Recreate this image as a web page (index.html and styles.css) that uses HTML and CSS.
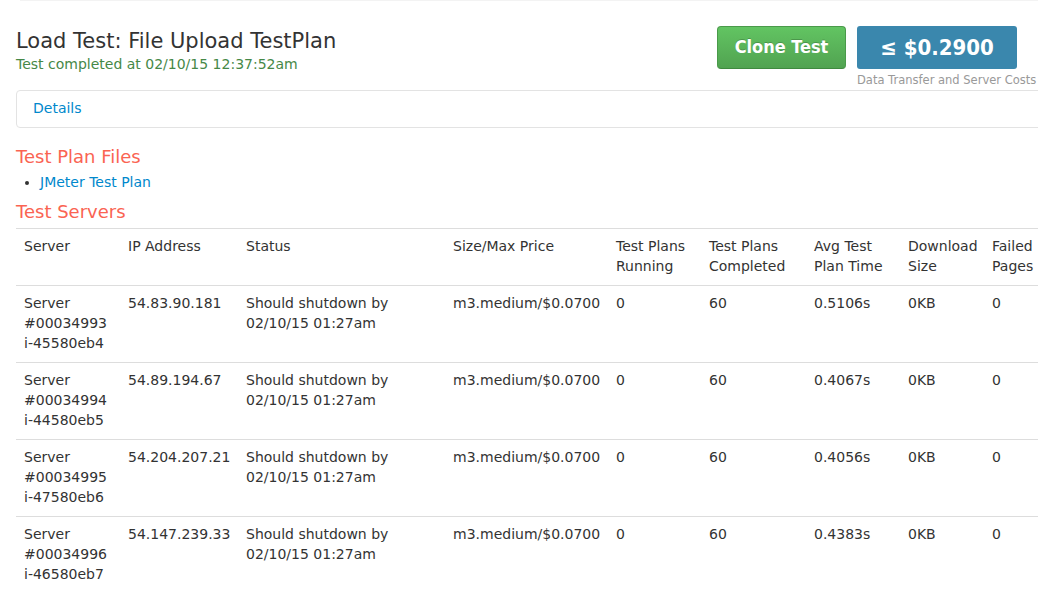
FILE: index.html
```html
<!DOCTYPE html>
<html>
<head>
<meta charset="utf-8">
<title>Load Test</title>
<link rel="stylesheet" href="styles.css">
</head>
<body>
<div class="topbar"></div>
<div class="page">
  <div class="header">
    <div class="title-block">
      <h1 class="title">Load Test: File Upload TestPlan</h1>
      <div class="subtitle">Test completed at 02/10/15 12:37:52am</div>
    </div>
    <div class="actions">
      <a class="btn-clone" href="#">Clone Test</a>
      <div class="price-col">
        <div class="price">≤ $0.2900</div>
        <div class="price-caption">Data Transfer and Server Costs</div>
      </div>
    </div>
  </div>

  <div class="panel"><a class="link" href="#">Details</a></div>

  <h2 class="section">Test Plan Files</h2>
  <ul class="files">
    <li><a class="link" href="#">JMeter Test Plan</a></li>
  </ul>

  <h2 class="section section-servers">Test Servers</h2>
  <table class="servers">
    <colgroup>
      <col class="c-server"><col class="c-ip"><col class="c-status"><col class="c-size">
      <col class="c-run"><col class="c-done"><col class="c-avg"><col class="c-dl"><col class="c-fail">
    </colgroup>
    <thead>
      <tr>
        <th>Server</th><th>IP Address</th><th>Status</th><th>Size/Max Price</th>
        <th>Test Plans<br>Running</th><th>Test Plans<br>Completed</th><th>Avg Test<br>Plan Time</th>
        <th>Download<br>Size</th><th>Failed<br>Pages</th>
      </tr>
    </thead>
    <tbody>
      <tr>
        <td>Server<br>#00034993<br>i-45580eb4</td><td>54.83.90.181</td><td>Should shutdown by<br>02/10/15 01:27am</td>
        <td>m3.medium/$0.0700</td><td>0</td><td>60</td><td>0.5106s</td><td>0KB</td><td>0</td>
      </tr>
      <tr>
        <td>Server<br>#00034994<br>i-44580eb5</td><td>54.89.194.67</td><td>Should shutdown by<br>02/10/15 01:27am</td>
        <td>m3.medium/$0.0700</td><td>0</td><td>60</td><td>0.4067s</td><td>0KB</td><td>0</td>
      </tr>
      <tr>
        <td>Server<br>#00034995<br>i-47580eb6</td><td>54.204.207.21</td><td>Should shutdown by<br>02/10/15 01:27am</td>
        <td>m3.medium/$0.0700</td><td>0</td><td>60</td><td>0.4056s</td><td>0KB</td><td>0</td>
      </tr>
      <tr>
        <td>Server<br>#00034996<br>i-46580eb7</td><td>54.147.239.33</td><td>Should shutdown by<br>02/10/15 01:27am</td>
        <td>m3.medium/$0.0700</td><td>0</td><td>60</td><td>0.4383s</td><td>0KB</td><td>0</td>
      </tr>
    </tbody>
  </table>
</div>
</body>
</html>
```

FILE: styles.css
```css
html, body {
  margin: 0;
  padding: 0;
  overflow: hidden;
  background: #fff;
}
body {
  font-family: "DejaVu Sans", "Liberation Sans", sans-serif;
  font-size: 14px;
  line-height: 20px;
  color: #333;
}
.topbar {
  height: 1px;
  margin-left: 20px;
  background: #f3f3f3;
}
.page {
  width: 1080px;
  padding-left: 16px;
  box-sizing: border-box;
}
.header {
  display: flex;
  justify-content: space-between;
  align-items: flex-start;
  padding-right: 63px;
}
.title {
  margin: 27px 0 0;
  font-size: 21px;
  line-height: 26px;
  font-weight: normal;
  color: #333;
}
.subtitle {
  color: #468847;
  font-size: 14px;
  line-height: 20px;
}
.actions {
  display: flex;
  gap: 11px;
  margin-top: 25px;
}
.btn-clone {
  display: block;
  box-sizing: border-box;
  width: 129px;
  height: 43px;
  padding-bottom: 2px;
  border: 1px solid #4a9a4a;
  border-bottom-color: #3f8a3f;
  border-radius: 4px;
  background: linear-gradient(#62c462, #51a351);
  color: #fff;
  text-decoration: none;
  text-align: center;
  font-family: "DejaVu Sans Condensed", "DejaVu Sans", sans-serif;
  font-stretch: condensed;
  font-weight: bold;
  font-size: 18px;
  line-height: 39px;
  text-shadow: 0 -1px 0 rgba(0,0,0,0.2);
}
.price-col {
  width: 160px;
}
.price {
  height: 43px;
  border-radius: 3px;
  background: #3a87ad;
  color: #fff;
  text-align: center;
  font-family: "DejaVu Sans Condensed", "DejaVu Sans", sans-serif;
  font-stretch: condensed;
  font-weight: bold;
  font-size: 22px;
  line-height: 43px;
}
.price-caption {
  margin-top: 5px;
  white-space: nowrap;
  font-size: 11.5px;
  line-height: 13px;
  color: #999;
}
.panel {
  margin-top: 3px;
  border: 1px solid #e3e3e3;
  border-radius: 4px;
  padding: 7px 16px 9px;
  line-height: 20px;
}
.link {
  color: #0088cc;
  text-decoration: none;
}
.section {
  margin: 18px 0 0;
  font-size: 18px;
  line-height: 22px;
  font-weight: normal;
  color: #fa6352;
}
.files {
  margin: 4px 0 0;
  padding-left: 24px;
}
.files li {
  line-height: 20px;
}
.section-servers {
  margin-top: 9px;
}
.servers {
  margin-top: 5px;
  border-collapse: collapse;
  table-layout: fixed;
  width: 1048px;
}
.servers th,
.servers td {
  padding: 7px 8px 9px;
  border-top: 1px solid #ddd;
  text-align: left;
  vertical-align: top;
  font-weight: normal;
  line-height: 20px;
  white-space: nowrap;
}
.c-server { width: 104px; }
.c-ip { width: 118px; }
.c-status { width: 207px; }
.c-size { width: 163px; }
.c-run { width: 93px; }
.c-done { width: 105px; }
.c-avg { width: 94px; }
.c-dl { width: 84px; }
.c-fail { width: 80px; }
```
